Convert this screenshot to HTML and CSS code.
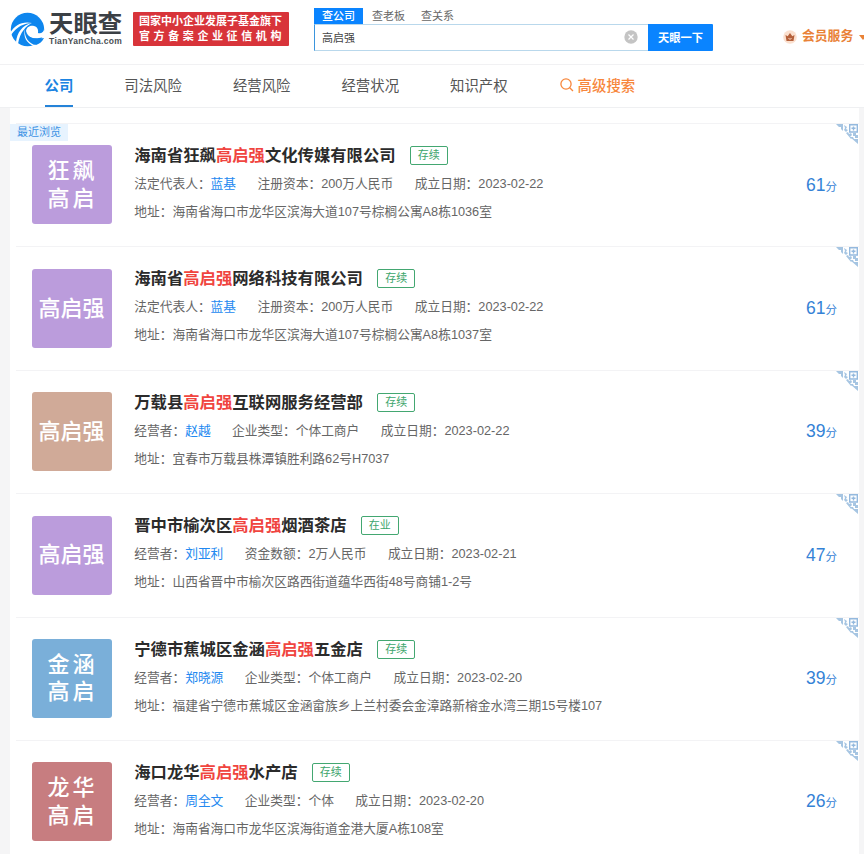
FILE: index.html
```
<!DOCTYPE html>
<html lang="zh-CN">
<head>
    <meta charset="UTF-8">
    <meta name="viewport" content="width=device-width, initial-scale=1.0">
    <title>高启强 - 天眼查</title>
    <link rel="stylesheet" href="styles.css">
</head>
<body>
    <svg class="defs" width="0" height="0">
        <symbol id="qr" viewBox="0 0 22 21">
            <path d="M0 0h7v7L5 5V3H3zM8 1l3 2-1 2 2 1-2 2-2-2 1-2zM10 9l2-1 1 2 2-1 1 2-2 2 2 1-1 1zM17 9h3v2h2v3h-3v-2h-2zM14 13l3 0 1 2 4 0v5z"/>
            <path d="M13.7.7h7.600v7.300h-7.600zM17.500 2.500v4M15.500 4.300h4" class="qr-line"/>
        </symbol>
    </svg>

    <div class="header">
        <div class="logo">
            <svg width="35" height="35" viewBox="0 0 35 35">
                <circle cx="17.500" cy="17.500" r="16.700" fill="#0e86ee"/>
                <path d="M16 20C16 15 20 13 24 14c4 1 6 4 10 3l1 8-6 1C22 27 17 25 16 20z" fill="#fff"/>
                <path d="M21 11c7-1 12 2 13 6 0 3-3 5-6 4 1-5-3-8-7-10z" fill="#0e86ee"/>
                <path d="M16 19c2 7 8 9 18 7-2 4-5 6-8 7-6-2-10-7-10-14z" fill="#0e86ee"/>
                <path d="M0 21C5 13 12 9 22 11 14 11.500 7 14 1 23z" fill="#fff"/>
                <path d="M6 30C7 21 12 13 22 11c-6 3-12 9-14 21z" fill="#fff"/>
                <path d="M15 17c-1 8 3 14 12 17l-2 .5c-9-3-12-10-10-17.500z" fill="#fff"/>
            </svg>
            <div class="logo-text">
                <div class="logo-name">天眼查</div>
                <div class="logo-site">TianYanCha.com</div>
            </div>
        </div>
        <div class="slogan">
            <p>国家中小企业发展子基金旗下</p>
            <p class="wide">官方备案企业征信机构</p>
        </div>
        <div class="search">
            <div class="search-tabs">
                <span class="on">查公司</span>
                <span>查老板</span>
                <span>查关系</span>
            </div>
            <div class="search-box">
                <div class="search-input">
                    <span>高启强</span>
                    <svg width="14" height="14" viewBox="0 0 14 14">
                        <circle cx="7" cy="7" r="6.700" fill="#c4c4c4"/>
                        <path d="M4.500 4.500l5 5M9.500 4.500l-5 5" stroke="#fff" stroke-width="1.200"/>
                    </svg>
                </div>
                <button>天眼一下</button>
            </div>
        </div>
        <div class="vip">
            <svg width="14" height="14" viewBox="0 0 14 14">
                <circle cx="7" cy="7" r="6.800" fill="#fbe0cf"/>
                <path d="M2.500 5l2.200 1.300L7 3l2.300 3.300L11.500 5l-1 6h-7z" fill="#b5603a"/>
                <path d="M5.500 8L7 9.500 8.500 8" stroke="#fbe0cf" fill="none"/>
            </svg>
            <span>会员服务</span>
            <i class="caret"></i>
        </div>
    </div>

    <div class="nav">
        <a class="active">公司</a>
        <a>司法风险</a>
        <a>经营风险</a>
        <a>经营状况</a>
        <a>知识产权</a>
        <a class="advanced">
            <svg width="14" height="14" viewBox="0 0 14 14">
                <circle cx="6" cy="6" r="5.100"/>
                <path d="M9.700 9.700l3.300 3.300"/>
            </svg>高级搜索</a>
    </div>

    <div class="list">
        <div class="item">
            <span class="recent">最近浏览</span>
            <div class="avatar purple two">狂飙<br>高启</div>
            <div class="info">
                <div class="title"><h3>海南省狂飙<em>高启强</em>文化传媒有限公司</h3><span class="tag">存续</span></div>
                <div class="meta"><span>法定代表人：<a>蓝基</a></span><span>注册资本：200万人民币</span><span>成立日期：2023-02-22</span></div>
                <div class="meta">地址：海南省海口市龙华区滨海大道107号棕榈公寓A8栋1036室</div>
            </div>
            <div class="score">61<small>分</small></div>
            <svg class="qr"><use href="#qr"/></svg>
        </div>

        <div class="item">
            <div class="avatar purple">高启强</div>
            <div class="info">
                <div class="title"><h3>海南省<em>高启强</em>网络科技有限公司</h3><span class="tag">存续</span></div>
                <div class="meta"><span>法定代表人：<a>蓝基</a></span><span>注册资本：200万人民币</span><span>成立日期：2023-02-22</span></div>
                <div class="meta">地址：海南省海口市龙华区滨海大道107号棕榈公寓A8栋1037室</div>
            </div>
            <div class="score">61<small>分</small></div>
            <svg class="qr"><use href="#qr"/></svg>
        </div>

        <div class="item">
            <div class="avatar brown">高启强</div>
            <div class="info">
                <div class="title"><h3>万载县<em>高启强</em>互联网服务经营部</h3><span class="tag">存续</span></div>
                <div class="meta"><span>经营者：<a>赵越</a></span><span>企业类型：个体工商户</span><span>成立日期：2023-02-22</span></div>
                <div class="meta">地址：宜春市万载县株潭镇胜利路62号H7037</div>
            </div>
            <div class="score">39<small>分</small></div>
            <svg class="qr"><use href="#qr"/></svg>
        </div>

        <div class="item">
            <div class="avatar purple">高启强</div>
            <div class="info">
                <div class="title"><h3>晋中市榆次区<em>高启强</em>烟酒茶店</h3><span class="tag">在业</span></div>
                <div class="meta"><span>经营者：<a>刘亚利</a></span><span>资金数额：2万人民币</span><span>成立日期：2023-02-21</span></div>
                <div class="meta">地址：山西省晋中市榆次区路西街道蕴华西街48号商铺1-2号</div>
            </div>
            <div class="score">47<small>分</small></div>
            <svg class="qr"><use href="#qr"/></svg>
        </div>

        <div class="item">
            <div class="avatar blue two">金涵<br>高启</div>
            <div class="info">
                <div class="title"><h3>宁德市蕉城区金涵<em>高启强</em>五金店</h3><span class="tag">存续</span></div>
                <div class="meta"><span>经营者：<a>郑晓源</a></span><span>企业类型：个体工商户</span><span>成立日期：2023-02-20</span></div>
                <div class="meta">地址：福建省宁德市蕉城区金涵畲族乡上兰村委会金漳路新榕金水湾三期15号楼107</div>
            </div>
            <div class="score">39<small>分</small></div>
            <svg class="qr"><use href="#qr"/></svg>
        </div>

        <div class="item">
            <div class="avatar red two">龙华<br>高启</div>
            <div class="info">
                <div class="title"><h3>海口龙华<em>高启强</em>水产店</h3><span class="tag">存续</span></div>
                <div class="meta"><span>经营者：<a>周全文</a></span><span>企业类型：个体</span><span>成立日期：2023-02-20</span></div>
                <div class="meta">地址：海南省海口市龙华区滨海街道金港大厦A栋108室</div>
            </div>
            <div class="score">26<small>分</small></div>
            <svg class="qr"><use href="#qr"/></svg>
        </div>
    </div>
</body>
</html>
```
FILE: styles.css
```
*{
    padding: 0;
    margin: 0;
    box-sizing: border-box;
}

body{
    height: 854px;
    overflow: hidden;
    background-color: #f5f5f6;
    font-family: "Liberation Sans", "Noto Sans CJK SC", sans-serif;
    color: #666;
}

.defs{
    display: block;
}

/* header */
.header{
    display: flex;
    height: 65px;
    padding-left: 10px;
    background-color: #fff;
    border-bottom: 1px solid #f1f1f3;
    white-space: nowrap;
}

.header > div{
    flex-shrink: 0;
}

.logo{
    display: flex;
    width: 123px;
    padding-top: 12px;
}

.logo-text{
    margin-left: 4px;
}

.logo-name{
    font-size: 24.400px;
    line-height: 23px;
    font-weight: bold;
    color: #3b4045;
}

.logo-site{
    margin-top: 1px;
    font-size: 8.500px;
    line-height: 11px;
    font-weight: bold;
    letter-spacing: 0.350px;
    color: #4a4f55;
}

.slogan{
    width: 156px;
    height: 34px;
    margin-top: 12px;
    padding: 2px 0 0 6px;
    border-radius: 1px;
    background-color: #d8343a;
    color: #fff;
    font-size: 11px;
    line-height: 15px;
    font-weight: bold;
}

.slogan .wide{
    letter-spacing: 3.600px;
}

.search{
    width: 399px;
    margin: 8px 0 0 25px;
}

.search-tabs{
    display: flex;
    font-size: 11px;
    line-height: 16px;
}

.search-tabs span{
    width: 50px;
    padding-left: 8px;
}

.search-tabs .on{
    width: 49px;
    background-color: #0a84ff;
    color: #fff;
    font-weight: 500;
}

.search-tabs .on + span{
    padding-left: 9px;
}

.search-box{
    display: flex;
    height: 27px;
}

.search-input{
    display: flex;
    justify-content: space-between;
    align-items: center;
    width: 334px;
    padding: 0 10px 2px 7px;
    border: 1px solid #b9d8ec;
    border-left-color: #3b95dd;
    border-right: none;
    font-size: 11px;
    color: #444;
}

button{
    width: 65px;
    border: none;
    border-radius: 0 1px 1px 0;
    background-color: #0a84ff;
    color: #fff;
    font-family: inherit;
    font-size: 11.300px;
    font-weight: bold;
    padding-bottom: 2px;
}

.vip{
    display: flex;
    align-items: center;
    height: 24px;
    margin: 25px 0 0 70px;
    font-size: 12.800px;
    line-height: 20px;
    font-weight: bold;
    color: #e98237;
}

.vip span{
    padding-bottom: 2px;
}

.vip svg{
    margin-right: 5px;
}

.caret{
    margin-left: 6px;
    border: 4px solid transparent;
    border-top: 5px solid #e98237;
    border-bottom: none;
}

/* category nav */
.nav{
    display: flex;
    gap: 51px;
    height: 43px;
    padding-left: 44.500px;
    background-color: #fff;
    border-bottom: 1px solid #eff0f2;
    font-size: 14.400px;
    line-height: 42px;
    color: #555;
}

.nav .active{
    border-bottom: 2px solid #2583d8;
    color: #1b84e2;
    font-weight: bold;
}

.nav .advanced{
    display: flex;
    align-items: center;
    height: 42px;
    color: #f7873c;
    font-weight: 500;
}

.advanced svg{
    margin: 0 4px 2px 1px;
    fill: none;
    stroke: #f7873c;
    stroke-width: 1.300;
}

/* company list */
.list{
    width: 849px;
    height: 760px;
    margin-left: 10px;
    padding-top: 15px;
    background-color: #fff;
}

.item{
    position: relative;
    display: flex;
    height: 123.400px;
    padding: 18px 0 0 21.500px;
    background: linear-gradient(#f3f3f5, #f3f3f5) no-repeat 6px 0 / 100% 1px;
}

.recent{
    position: absolute;
    left: 0;
    top: 1px;
    width: 58px;
    height: 17px;
    padding-left: 7px;
    background-color: #e7f3fe;
    color: #3c92e4;
    font-size: 11px;
    line-height: 17px;
}

.avatar{
    display: flex;
    justify-content: center;
    align-items: center;
    width: 80px;
    height: 79px;
    margin: 4.400px 22.800px 0 0;
    border-radius: 3px;
    color: #fff;
    font-size: 22px;
    font-weight: 500;
    line-height: 27.500px;
}

.two{
    padding-left: 2px;
    letter-spacing: 3px;
}

.purple{
    background-color: #bb9cdc;
}

.brown{
    background-color: #d0aa98;
}

.blue{
    background-color: #7aafd9;
}

.red{
    background-color: #c77d80;
}

.info{
    flex: 1;
    font-size: 12.720px;
    line-height: 29px;
    white-space: nowrap;
}

.title{
    display: flex;
    align-items: center;
    height: 28px;
    padding-top: 1px;
}

h3{
    font-size: 16.330px;
    color: #2b2b2b;
}

em{
    font-style: normal;
    color: #f0453f;
}

.tag{
    width: 38.500px;
    height: 19px;
    margin-left: 14px;
    border: 1px solid #43a771;
    border-radius: 2px;
    color: #3da56c;
    font-size: 11px;
    line-height: 17px;
    text-align: center;
}

.meta{
    display: flex;
    gap: 21.500px;
    height: 28px;
}

.meta a{
    color: #2288f0;
}

.score{
    width: 53px;
    padding-top: 29.500px;
    font-size: 17.500px;
    line-height: 28px;
    color: #3482d6;
}

.score small{
    font-size: 11.500px;
}

.qr{
    position: absolute;
    right: 1px;
    top: 1px;
    width: 22px;
    height: 21px;
    fill: #a6c5e2;
}

.qr-line{
    fill: none;
    stroke: #94b9de;
    stroke-width: 1.400;
}
```
